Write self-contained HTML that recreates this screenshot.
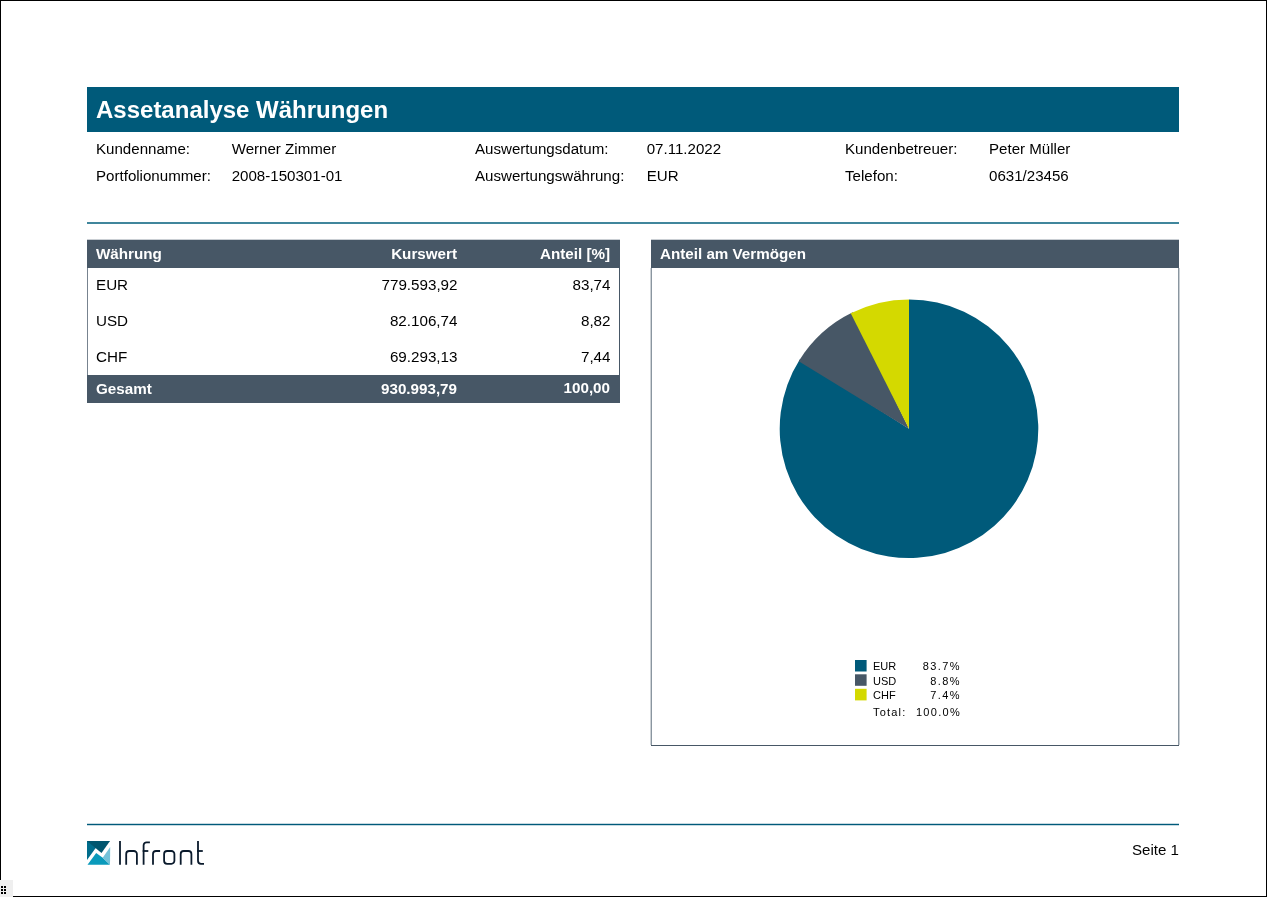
<!DOCTYPE html>
<html><head><meta charset="utf-8">
<style>
html,body{margin:0;padding:0;}
body{width:1267px;height:897px;position:relative;overflow:hidden;background:#fff;font-family:"Liberation Sans",sans-serif;color:#111;-webkit-font-smoothing:antialiased;}
.a{position:absolute;white-space:nowrap;}
.lbl{font-size:15.1px;line-height:18px;color:#000;}
.td{font-size:15.2px;line-height:18px;color:#000;}
.b{font-size:15.2px;line-height:18px;font-weight:bold;color:#fff;}
</style></head><body><div id="pg" style="position:absolute;left:0;top:0;width:1267px;height:897px;will-change:transform">
<!-- page frame -->
<div class="a" style="left:0;top:0;width:1267px;height:1px;background:#000"></div>
<div class="a" style="left:0;top:0;width:1px;height:880px;background:#000"></div>
<div class="a" style="left:1266px;top:0;width:1px;height:897px;background:#000"></div>
<div class="a" style="left:13px;top:896px;width:1254px;height:1px;background:#000"></div>
<div class="a" style="left:0;top:880px;width:13px;height:17px;background:#efefef"></div>
<svg class="a" style="left:0;top:880px" width="13" height="17">
<g fill="#000"><rect x="1" y="6" width="2" height="2"/><rect x="4" y="6" width="2" height="2"/><rect x="1" y="9" width="2" height="2"/><rect x="4" y="9" width="2" height="2"/><rect x="1" y="12" width="2" height="2"/><rect x="4" y="12" width="2" height="2"/></g>
</svg>

<!-- title -->
<div class="a" style="left:87px;top:87px;width:1092px;height:45px;background:#005a7a"></div>
<div class="a" style="left:96px;top:96px;font-size:24px;line-height:28px;font-weight:bold;color:#fff">Assetanalyse Währungen</div>

<!-- info -->
<div class="a lbl" style="left:96px;top:140px">Kundenname:</div>
<div class="a lbl" style="left:231.7px;top:140px">Werner Zimmer</div>
<div class="a lbl" style="left:96px;top:167px">Portfolionummer:</div>
<div class="a lbl" style="left:231.7px;top:167px">2008-150301-01</div>
<div class="a lbl" style="left:475px;top:140px">Auswertungsdatum:</div>
<div class="a lbl" style="left:646.7px;top:140px">07.11.2022</div>
<div class="a lbl" style="left:475px;top:167px">Auswertungswährung:</div>
<div class="a lbl" style="left:646.7px;top:167px">EUR</div>
<div class="a lbl" style="left:845px;top:140px">Kundenbetreuer:</div>
<div class="a lbl" style="left:989px;top:140px">Peter Müller</div>
<div class="a lbl" style="left:845px;top:167px">Telefon:</div>
<div class="a lbl" style="left:989px;top:167px">0631/23456</div>

<div class="a" style="left:87px;top:222px;width:1092px;height:2px;background:#40869c"></div>

<!-- table -->
<div class="a" style="left:87px;top:239px;width:533px;height:1px;background:#c9ced3"></div>
<div class="a" style="left:87px;top:240px;width:533px;height:28px;background:#475766"></div>
<div class="a" style="left:87px;top:268px;width:1px;height:107px;background:#77838f"></div>
<div class="a" style="left:619px;top:268px;width:1px;height:107px;background:#475766"></div>
<div class="a" style="left:87px;top:375px;width:533px;height:28px;background:#475766"></div>
<div class="a b" style="left:96px;top:245px">Währung</div>
<div class="a b" style="right:810px;top:245px">Kurswert</div>
<div class="a b" style="right:657px;top:245px">Anteil [%]</div>

<div class="a td" style="left:96px;top:276px">EUR</div>
<div class="a td" style="right:809.5px;top:276px">779.593,92</div>
<div class="a td" style="right:656.5px;top:276px">83,74</div>
<div class="a td" style="left:96px;top:312px">USD</div>
<div class="a td" style="right:809.5px;top:312px">82.106,74</div>
<div class="a td" style="right:656.5px;top:312px">8,82</div>
<div class="a td" style="left:96px;top:348px">CHF</div>
<div class="a td" style="right:809.5px;top:348px">69.293,13</div>
<div class="a td" style="right:656.5px;top:348px">7,44</div>
<div class="a b" style="left:96px;top:380px">Gesamt</div>
<div class="a b" style="right:810px;top:380px">930.993,79</div>
<div class="a b" style="right:657px;top:379px">100,00</div>

<!-- chart box -->
<div class="a" style="left:651px;top:239px;width:528px;height:1px;background:#c9ced3"></div>
<div class="a" style="left:651px;top:240px;width:528px;height:28px;background:#475766"></div>
<div class="a" style="left:650px;top:268px;width:1px;height:477px;background:#cdd2d6"></div>
<div class="a" style="left:651px;top:268px;width:1px;height:478px;background:#8a96a0"></div>
<div class="a" style="left:1178px;top:268px;width:1px;height:478px;background:#8a96a0"></div>
<div class="a" style="left:1179px;top:268px;width:1px;height:477px;background:#c8ced3"></div>
<div class="a" style="left:651px;top:745px;width:528px;height:1px;background:#475766"></div>
<div class="a b" style="left:660px;top:245px">Anteil am Vermögen</div>

<svg class="a" style="left:0;top:0" width="1267" height="897">
<path fill="#005a7a" d="M909.0 428.7L909.00 299.40A129.3 129.3 0 1 1 799.91 359.30Z"/>
<path fill="#475766" d="M909.0 428.7L798.71 361.21A129.3 129.3 0 0 1 852.76 312.27Z"/>
<path fill="#d4d900" d="M909.0 428.7L850.73 313.27A129.3 129.3 0 0 1 909.00 299.40Z"/>
<rect x="855" y="660" width="11.6" height="11.5" fill="#005a7a"/>
<rect x="855" y="674.3" width="11.6" height="11.5" fill="#475766"/>
<rect x="855" y="688.8" width="11.6" height="11.6" fill="#d4d900"/>
</svg>

<!-- legend -->
<div class="a" style="left:873px;top:659px;font-size:11px;line-height:14.5px;color:#000">EUR<br>USD<br>CHF</div>
<div class="a" style="left:873px;top:705px;font-size:11px;line-height:14px;color:#000;letter-spacing:1.2px">Total:</div>
<div class="a" style="right:306px;top:659px;font-size:11px;line-height:14.5px;color:#000;text-align:right;letter-spacing:1.4px">83.7%<br>8.8%<br>7.4%</div>
<div class="a" style="right:306px;top:705px;font-size:11px;line-height:14px;color:#000;letter-spacing:1.3px">100.0%</div>
<!-- footer -->
<div class="a" style="left:87px;top:823px;width:1092px;height:3px;background:#c6d9e1"></div>
<div class="a" style="left:87px;top:824px;width:1092px;height:1px;background:#005a7a"></div>
<svg class="a" style="left:87px;top:841px" width="120" height="26">
<polygon fill="#006d8c" points="0,0 23,0 8.5,7.2 0,19.1"/>
<polygon fill="#00566f" points="0,0 23,0 14.5,12.1"/>

<polygon fill="#0a9abb" points="0.5,23.7 9.2,12 15.7,16.8 23,23.7"/>
<polygon fill="#74c2d9" points="15.7,16.8 23.2,6 23,23.7"/>
<g fill="none" stroke="#0a1a2c" stroke-width="1.8">
<path d="M33 0.1V23.8"/>
<path d="M39.2 23.8V13a3 3 0 0 1 3-3h4.7a3 3 0 0 1 3 3V23.8"/>
<path d="M56.6 23.8V4.3a3 3 0 0 1 3-3h3.3"/>
<path d="M55.7 10H61.3"/>
<path d="M66 23.8V13a3 3 0 0 1 3-3h4.1"/>
<path d="M77.1 13a3 3 0 0 1 3-3h4.3a3 3 0 0 1 3 3v6.8a3 3 0 0 1-3 3h-4.3a3 3 0 0 1-3-3Z"/>
<path d="M93.7 23.8V13a3 3 0 0 1 3-3h4.7a3 3 0 0 1 3 3V23.8"/>
<path d="M111 0.1V19.8a3 3 0 0 0 3 3h3"/>
<path d="M110.1 10H115.8"/>
</g>
</svg>
<div class="a" style="right:88px;top:841px;font-size:15.1px;line-height:18px;color:#000">Seite 1</div>
</div></body></html>
